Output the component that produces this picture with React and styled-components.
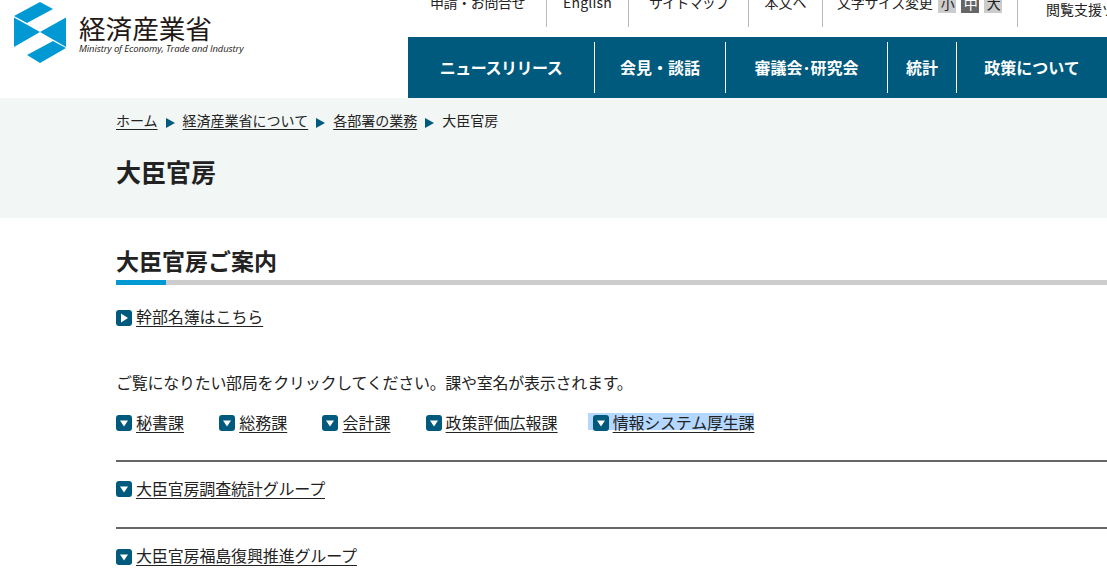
import React from "react";
import styled, { createGlobalStyle } from "styled-components";

const Global = createGlobalStyle`
  html, body { margin: 0; padding: 0; background: #fff; }
  body {
    width: 1107px; height: 575px; overflow: hidden;
    font-family: "Noto Sans CJK JP", "Liberation Sans", sans-serif;
    color: #222;
  }
`;
const Header = styled.header`display: flex; height: 98px; overflow: hidden;`;
const Logo = styled.a`
  width: 408px; flex: none; display: flex; align-items: flex-start; gap: 13px;
  padding: 2px 0 0 14px; box-sizing: border-box; color: #231815;
`;
const LogoText = styled.div`display: flex; flex-direction: column; padding-top: 11px;`;
const LogoJa = styled.span`font-size: 26.6px; line-height: 30px; white-space: nowrap;`;
const LogoEn = styled.span`
  font-family: "Open Sans", sans-serif; font-style: italic; font-size: 9.45px; line-height: 12px;
  white-space: nowrap; letter-spacing: -0.1px;
`;
const HeaderRight = styled.div`flex: 1; min-width: 0; display: flex; flex-direction: column;`;
const Util = styled.ul`
  list-style: none; margin: -8px 0 0; padding: 0 0 0 22px; height: 45px; display: flex; align-items: flex-start;
  font-size: 14px; line-height: 20px; white-space: nowrap; color: #222;
`;
const UtilItem = styled.li`
  height: 35px; box-sizing: border-box; border-right: 1px solid #bbb;
  width: ${p => p.$w}px; flex: none; display: flex; justify-content: ${p => p.$start ? "flex-start" : "center"}; gap: 3px;
  padding-left: ${p => p.$pl || 0}px;
  letter-spacing: ${p => p.$ls || 0}px;
`;
const UtilExtra = styled.li`padding: 7px 0 0 28px; flex: none;`;
const Size = styled.span`
  width: 18px; height: 21px; display: flex; align-items: center; justify-content: center;
  background: ${p => p.$on ? "#666" : "#ccc"}; color: ${p => p.$on ? "#fff" : "#222"};
  &:first-of-type { margin-left: 3px; }
  & + & { margin-left: 2px; }
`;
const Nav = styled.nav`flex: 1; background: #005a7d; display: flex; padding: 5px 0;`;
const NavItem = styled.a`
  width: ${p => p.$w}px; flex: none; box-sizing: border-box; display: flex; align-items: center; justify-content: center;
  color: #fff; font-weight: 700; font-size: 16px; white-space: nowrap; padding-bottom: 2px;
  letter-spacing: ${p => p.$ls || 0}px;
  & + & { border-left: 1px solid #fff; }
`;
const Band = styled.div`height: 120px; background: #f2f6f5; padding: 12px 116px 0; box-sizing: border-box;`;
const Crumbs = styled.div`display: flex; align-items: center; font-size: 14px; line-height: 20px; white-space: nowrap;`;
const Tri = styled.span`
  width: 0; height: 0; margin: 5px 8px 0; border-left: 9px solid #005a7d;
  border-top: 5px solid transparent; border-bottom: 5px solid transparent;
`;
const Link = styled.a`
  color: #222; text-decoration: underline; text-underline-offset: 3px; text-decoration-thickness: 1px;
  letter-spacing: ${p => p.$ls || 0}px;
`;
const Title = styled.h1`margin: 23px 0 0; font-size: 25px; line-height: 36px; font-weight: 700;`;
const Main = styled.main`padding: 25px 0 0 116px;`;
const Heading = styled.h2`
  margin: 0; font-size: 23px; line-height: 34px; font-weight: 700; padding-bottom: 3px;
  border-bottom: 5px solid #ccc; position: relative;
  &::after { content: ""; position: absolute; left: 0; bottom: -5px; width: 50px; height: 5px; background: #0099d4; }
`;
const IconLink = styled.span`
  display: inline-flex; align-items: center; gap: 4px; font-size: 16px; line-height: 20px; white-space: nowrap;
`;
const SelectedLink = styled(IconLink)`
  background: #b3d7ff; padding-left: 5px; height: 17px; margin-left: -5.2px;
`;
const Square = styled.svg`width: 16px; height: 16px; flex: none; margin-top: 3px;`;
const Guide = styled.div`margin-top: 21px;`;
const Notice = styled.p`margin: 41px 0 0; font-size: 16px; line-height: 20px; letter-spacing: -0.27px; white-space: nowrap;`;
const Tabs = styled.div`display: flex; align-items: center; gap: 35.2px; margin: 20px 0 28px;`;
const Rule = styled.hr`border: 0; height: 2px; background: #666; margin: 25px 0 16px;`;

const Icon = ({ down }) => (
  <Square viewBox="0 0 16 16">
    <rect width="16" height="16" rx="3" fill="#005a7d" />
    <path d={down ? "M4 5.5h8l-4 6z" : "M5 3.5v9l7-4.5z"} fill="#fff" />
  </Square>
);

export default function App() {
  return (
    <>
      <Global />
      <Header>
        <Logo>
          <svg width="52" height="61" viewBox="14 2 52 61" fill="#0099d4">
            <path d="M14 16 40 2 53 9 27 23z" />
            <path d="M14 17.5 40 32 14 47zM66 17.5 66 47 40 32z" />
            <path d="M27 55 53 41 66 48 40 63z" />
          </svg>
          <LogoText>
            <LogoJa>経済産業省</LogoJa>
            <LogoEn>Ministry of Economy, Trade and Industry</LogoEn>
          </LogoText>
        </Logo>
        <HeaderRight>
          <Util>
            <UtilItem $w={117} $start $ls={-0.4}>申請・お問合せ</UtilItem>
            <UtilItem $w={82} $ls={0.2}>English</UtilItem>
            <UtilItem $w={120} $ls={-0.8}>サイトマップ</UtilItem>
            <UtilItem $w={74}>本文へ</UtilItem>
            <UtilItem $w={195} $start $pl={14} $ls={-0.3}>文字サイズ変更<Size>小</Size><Size $on>中</Size><Size>大</Size></UtilItem>
            <UtilExtra>閲覧支援ツール</UtilExtra>
          </Util>
          <Nav>
            <NavItem $w={186} $ls={-0.5}>ニュースリリース</NavItem>
            <NavItem $w={131}>会見・談話</NavItem>
            <NavItem $w={162}>審議会･研究会</NavItem>
            <NavItem $w={69}>統計</NavItem>
            <NavItem $w={151}>政策について</NavItem>
          </Nav>
        </HeaderRight>
      </Header>
      <Band>
        <Crumbs>
          <Link>ホーム</Link><Tri /><Link>経済産業省について</Link><Tri /><Link>各部署の業務</Link><Tri /><span>大臣官房</span>
        </Crumbs>
        <Title>大臣官房</Title>
      </Band>
      <Main>
        <Heading>大臣官房ご案内</Heading>
        <Guide><IconLink><Icon /><Link $ls={-0.1}>幹部名簿はこちら</Link></IconLink></Guide>
        <Notice>ご覧になりたい部局をクリックしてください。課や室名が表示されます。</Notice>
        <Tabs>
          <IconLink><Icon down /><Link>秘書課</Link></IconLink>
          <IconLink><Icon down /><Link>総務課</Link></IconLink>
          <IconLink><Icon down /><Link>会計課</Link></IconLink>
          <IconLink><Icon down /><Link>政策評価広報課</Link></IconLink>
          <SelectedLink><Icon down /><Link $ls={-0.2}>情報システム厚生課</Link></SelectedLink>
        </Tabs>
        <Rule />
        <IconLink><Icon down /><Link $ls={-0.17}>大臣官房調査統計グループ</Link></IconLink>
        <Rule />
        <IconLink><Icon down /><Link $ls={-0.15}>大臣官房福島復興推進グループ</Link></IconLink>
      </Main>
    </>
  );
}
